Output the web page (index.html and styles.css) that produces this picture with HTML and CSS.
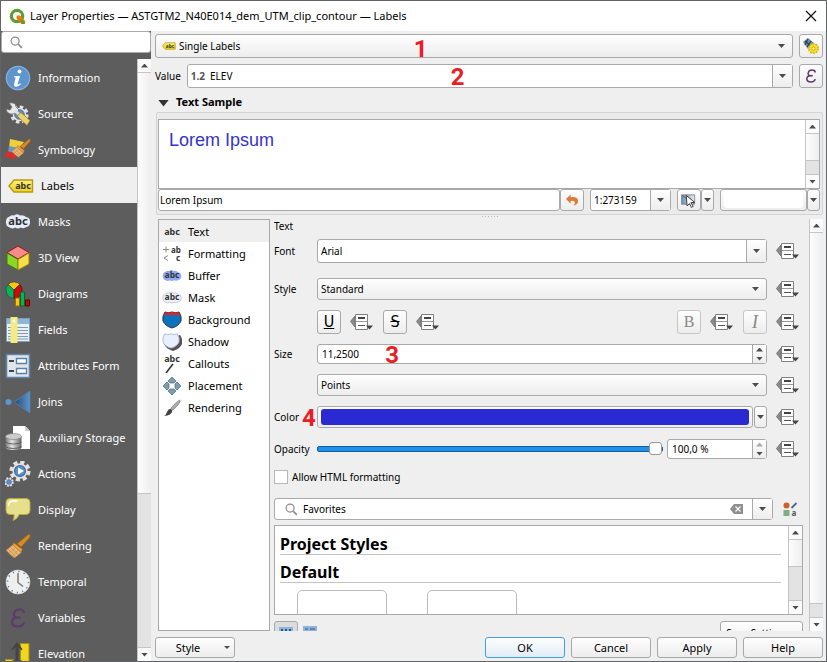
FILE: index.html
```html
<!DOCTYPE html>
<html lang="en">
<head>
<meta charset="utf-8">
<title>Layer Properties</title>
<link rel="stylesheet" href="styles.css">
</head>
<body>
<svg class="defs" aria-hidden="true">
  <defs>
    <linearGradient id="gy" x1="0" y1="0" x2="0" y2="1"><stop offset="0" stop-color="#fdf17a"/><stop offset="1" stop-color="#edd11c"/></linearGradient>
    <linearGradient id="gj" x1="0" x2="1"><stop offset="0" stop-color="#274a72"/><stop offset="1" stop-color="#5d95cf"/></linearGradient>
    <linearGradient id="gc" x1="0" x2="1"><stop offset="0" stop-color="#777"/><stop offset=".4" stop-color="#e4e4e4"/><stop offset="1" stop-color="#666"/></linearGradient>
    <linearGradient id="gw" x1="0" x2="1"><stop offset="0" stop-color="#6b8fae"/><stop offset="1" stop-color="#e8eef3"/></linearGradient>
    <symbol id="override" viewBox="0 0 24 18">
      <path d="M5 3v11L.5 8.500z" fill="#8a8a8a" stroke="#777"/>
      <path d="M5.500 1.500h12v15h-12z" fill="#fff" stroke="#808080"/>
      <path d="M8 5h7" stroke="#444" stroke-width="2"/>
      <path d="M6 8.500h11" stroke="#999"/>
      <path d="M8 12.500h7" stroke="#555"/>
      <path d="M16 12.500h7l-3.500 4z" fill="#444"/>
    </symbol>
    <symbol id="search" viewBox="0 0 14 14"><circle cx="5.500" cy="5.500" r="4.300" fill="#fafafa" stroke="#8c8c8c" stroke-width="1.300"/><path d="M8.800 8.800l4 4" stroke="#8c8c8c" stroke-width="1.700"/></symbol>
    <symbol id="tag" viewBox="0 0 26 14"><path d="M1 7l5-6h18.500v12H6z" fill="url(#gy)" stroke="#b89a12" stroke-width="1.400"/><text x="15" y="10" class="abc">abc</text></symbol>
    <symbol id="cloud" viewBox="0 0 28 18"><path d="M5 3Q7 1 10 2Q13-.5 16 2Q20 1 23 4Q27 4 27 9Q27 14 23 14.500Q20 16.500 17 15Q14 17 11 15Q8 17 5 15Q1 14 1 9Q1 4 5 3z"/><text x="14" y="12" class="abc abc-lg">abc</text></symbol>
    <symbol id="shield" viewBox="0 0 20 18"><path d="M3 1Q6 2.500 10 1Q14 2.500 17 1Q20 5 19 10Q17 15 10 17Q3 15 1 10Q0 5 3 1z"/></symbol>
    <symbol id="brush" viewBox="0 0 24 24"><path d="M22 1q2 1 1 3l-8 9-4-3z" fill="#d88a28" stroke="#9c5f14" stroke-width=".8"/><path d="M8 9l8 6-1 3-8-6z" fill="#f0a23c" stroke="#a86a1c" stroke-width=".6"/><path d="M7 11l8 7-6 5q-4-2-8-7z" fill="#e8b878" stroke="#a87838" stroke-width=".6"/><path d="M5 13l7 7M3 15l7 7M9 14l-5 4M12 16l-5 5" stroke="#b98746" stroke-width=".6"/></symbol>
    <symbol id="gear" viewBox="0 0 20 20"><circle cx="10" cy="10" r="7.800" fill="none" stroke="#e3e3e3" stroke-width="3.600" stroke-dasharray="3.600 2.520"/><circle cx="10" cy="10" r="7" fill="#e3e3e3"/><circle cx="10" cy="10" r="5" fill="#5a8fcc" stroke="#3c6597"/></symbol>
    <symbol id="i-info" viewBox="0 0 26 26"><circle cx="13" cy="13" r="11.700" fill="#5f95cf" stroke="#87afe0" stroke-width="1.200"/><circle cx="14.500" cy="6.500" r="2" fill="#fff"/><path d="M9.500 11h5.500l-2.300 8q0 1.300 2.500-.7l.8.7q-3 3.500-6 2.500-1.500-.7-1-2.500l1.700-6.500H9z" fill="#fff"/></symbol>
    <symbol id="i-source" viewBox="0 0 26 26"><g transform="translate(5 4)"><use href="#gear" width="19" height="19"/></g><path d="M4 2l3 4-2 3-4-1q1 5 6 5l4-1 3-3-3-3q0-5-7-4z" fill="#e9e9e9" stroke="#666" stroke-width=".7"/><path d="M10 10l5 4" stroke="#ddd" stroke-width="3"/><path d="M12 15l4-3.500 9 8-3 5z" fill="#ead46c" stroke="#8c772a" stroke-width=".8"/></symbol>
    <symbol id="i-symb" viewBox="0 0 26 26"><path d="M5 2l14 3-6 9-9-3z" fill="#f1cf38"/><path d="M4 9l10 2-2 5-9-1z" fill="#6d95bd"/><path d="M2 14l10 3-2 5-10-2z" fill="#d92d2b"/><use href="#brush" x="6" y="0" width="20" height="22"/></symbol>
    <symbol id="i-3d" viewBox="0 0 26 26"><path d="M13 1l11 6.500L13 14 2 7.500z" fill="#f58c8c" stroke="#a51212"/><path d="M2 8l11 6.500V25L2 19z" fill="#8ad62b" stroke="#3f7d0a"/><path d="M24 8l-11 6.500V25l11-6z" fill="#f8de49" stroke="#a38405"/></symbol>
    <symbol id="i-diag" viewBox="0 0 26 26"><path d="M9 9L3 3.500A8.200 8.200 0 0 1 15 3.500z" fill="#f6c80f" stroke="#533" stroke-width=".6"/><path d="M9 9v8.200A8.200 8.200 0 0 1 3 3.500z" fill="#0bb05a" stroke="#053" stroke-width=".6"/><path d="M9 9v8.200A8.200 8.200 0 0 0 15 3.500z" fill="#c80c0c" stroke="#500" stroke-width=".6"/><path d="M10.500 17h4v8h-4z" fill="#f6c80f" stroke="#a60"/><path d="M15.500 11h4v14h-4z" fill="#0bb05a" stroke="#063"/><path d="M20.500 19h4v6h-4z" fill="#b00c0c" stroke="#600"/></symbol>
    <symbol id="i-fields" viewBox="0 0 26 26"><path d="M1.500 1.500h23v23h-23z" fill="#eaf1f6" stroke="#7a9fc0"/><path d="M2 2h22v5H2z" fill="#8fb5d8"/><path d="M3 10.500h20M3 13.500h20M3 16.500h20M3 19.500h20M3 22h20" stroke="#7f98ae"/><path d="M6 0h6v26H6z" fill="#f3e98c" stroke="#f7f05a"/><circle cx="9" cy="4" r="1.500" fill="#fff"/></symbol>
    <symbol id="i-form" viewBox="0 0 26 26"><path d="M1.500 1.500h23v23h-23z" fill="#e2e5e8" stroke="#5c83ab" stroke-width="1.600"/><path d="M11.500 5.500h10v5h-10zM11.500 15.500h10v5h-10z" fill="#fff" stroke="#5a81aa" stroke-width="1.400"/><path d="M4 8h5M4 18h5" stroke="#444" stroke-width="2"/></symbol>
    <symbol id="i-joins" viewBox="0 0 26 26"><circle cx="3.500" cy="13" r="3" fill="#5d95cf"/><path d="M9 13L25 2v22z" fill="url(#gj)" stroke="#4f82b8" stroke-width=".8"/></symbol>
    <symbol id="i-aux" viewBox="0 0 26 26"><path d="M8 1h12l5 5v18H8z" fill="#fff"/><path d="M20 1v5h5z" fill="#ccc"/><path d="M.5 11.500v11q0 2.500 8 2.500t8-2.500v-11z" fill="url(#gc)"/><path d="M.5 17q2 2 8 2t8-2M.5 21.500q2 2 8 2t8-2" fill="none" stroke="#555" stroke-width=".9"/><ellipse cx="8.500" cy="11.500" rx="8" ry="3" fill="#ccc" stroke="#777" stroke-width=".6"/></symbol>
    <symbol id="i-actions" viewBox="0 0 26 26"><use href="#gear" x="4" y="-1" width="22" height="22"/><path d="M13 6.500v7l6-3.500z" fill="#fff"/><use href="#gear" x="-1" y="16" width="10" height="10"/></symbol>
    <symbol id="i-display" viewBox="0 0 26 26"><path d="M5 1.500h16q4 0 4 4v8q0 4-4 4h-7q-1 4-6 6 1.500-3 1-6H5q-4 0-4-4v-8q0-4 4-4z" fill="#e6df8c" stroke="#bdaa3c"/><path d="M3.500 9q0-5 5-5h4" fill="none" stroke="#fff" stroke-width="1.300"/></symbol>
    <symbol id="i-time" viewBox="0 0 26 26"><circle cx="13" cy="13" r="12" fill="#eef0f0" stroke="#ddd" stroke-width=".6"/><circle cx="13" cy="13" r="10.500" fill="none" stroke="#4b7fb5" stroke-width="1.500" stroke-dasharray="1.200 4.300"/><path d="M13 4v9.500l5 4" fill="none" stroke="#777" stroke-width="1.500"/></symbol>
    <symbol id="epsilon" viewBox="0 0 16 20"><path d="M14 5q0-3.500-4.500-3.500T4 5.500 8 9.500H10.500M8 9.500q-6 0-6 4.500 0 4.500 6 4.500 5 0 6-4" fill="none" stroke="currentColor" stroke-width="2.200"/></symbol>
    <symbol id="i-elev" viewBox="0 0 26 26"><path d="M15.500 2.500h8.500v23h-8.500z" fill="#f2d61b" stroke="#a98f10"/><path d="M.5 18.500h8v7h-8z" fill="#f2d61b" stroke="#a98f10"/><path d="M12 1l5.500 7-1 1.500L13.500 6v15h-3V6l-3 3.500-1-1.500z" fill="#444"/><path d="M7 20.500h10" stroke="#444" stroke-width="2"/></symbol>
  </defs>
</svg>

<div class="dialog">
  <header class="titlebar">
    <svg class="logo" viewBox="0 0 18 18"><circle cx="8.500" cy="8.500" r="6" fill="#fff" stroke="#5a9e33" stroke-width="3.400"/><path d="M8 8h3.500l5.500 5.500V17h-4L8 11.500z" fill="#ee7913"/><path d="M11.500 12.500h3L17 17h-3z" fill="#5a9e33"/></svg>
    <h1>Layer Properties — ASTGTM2_N40E014_dem_UTM_clip_contour — Labels</h1>
    <button class="close" aria-label="Close"><svg viewBox="0 0 12 12"><path d="M1 1l10 10M11 1L1 11" stroke="#111" stroke-width="1.200"/></svg></button>
  </header>

  <div class="body">
    <aside class="side">
      <label class="side-search"><svg><use href="#search"/></svg><input type="text" aria-label="Search"></label>
      <div class="side-list">
        <nav>
          <a href="#"><svg><use href="#i-info"/></svg>Information</a>
          <a href="#"><svg><use href="#i-source"/></svg>Source</a>
          <a href="#"><svg><use href="#i-symb"/></svg>Symbology</a>
          <a href="#" class="current"><svg><use href="#tag"/></svg>Labels</a>
          <a href="#"><svg class="cloud-mask"><use href="#cloud"/></svg>Masks</a>
          <a href="#"><svg><use href="#i-3d"/></svg>3D View</a>
          <a href="#"><svg><use href="#i-diag"/></svg>Diagrams</a>
          <a href="#"><svg><use href="#i-fields"/></svg>Fields</a>
          <a href="#"><svg><use href="#i-form"/></svg>Attributes Form</a>
          <a href="#"><svg><use href="#i-joins"/></svg>Joins</a>
          <a href="#"><svg><use href="#i-aux"/></svg>Auxiliary Storage</a>
          <a href="#"><svg><use href="#i-actions"/></svg>Actions</a>
          <a href="#"><svg><use href="#i-display"/></svg>Display</a>
          <a href="#"><svg><use href="#brush"/></svg>Rendering</a>
          <a href="#"><svg><use href="#i-time"/></svg>Temporal</a>
          <a href="#"><svg class="eps"><use href="#epsilon"/></svg>Variables</a>
          <a href="#"><svg><use href="#i-elev"/></svg>Elevation</a>
        </nav>
        <div class="sbar sbar-side"><i class="up"></i><b></b><i class="down"></i></div>
      </div>
    </aside>

    <main>
      <div class="row top">
        <div class="select mode"><svg><use href="#tag"/></svg><select aria-label="Label mode"><option>Single Labels</option></select><span class="mark mark-1">1</span></div>
        <button class="btn tool" aria-label="Automated placement settings"><svg viewBox="0 0 18 18"><path d="M1 5l5-4 6 5-6 6z" fill="#6f8ea6"/><path d="M3 4l6 5M6 2l-3 6M9 4L5 10" stroke="#24445e" stroke-width="1.200"/><circle cx="11.500" cy="11.500" r="4.800" fill="#f4dd2b" stroke="#d6b70e" stroke-width="1.400" stroke-dasharray="2 1"/><circle cx="11.500" cy="11.500" r="1.600" fill="#fff6a0" stroke="#b89a12" stroke-width=".7"/></svg></button>
      </div>
      <div class="row value">
        <label for="value">Value</label>
        <div class="combo"><span class="num">1.2</span><input id="value" type="text" value="ELEV"><button class="drop" aria-label="Choose field"></button><span class="mark mark-2">2</span></div>
        <button class="btn tool" aria-label="Expression"><svg class="eps"><use href="#epsilon"/></svg></button>
      </div>
      <button class="group"><i></i>Text Sample</button>
      <section class="sample">
        <div class="preview"><p>Lorem Ipsum</p><div class="sbar sbar-preview"><i class="up"></i><b></b><i class="down"></i></div></div>
        <div class="sample-row">
          <input class="field" type="text" value="Lorem Ipsum" aria-label="Sample text">
          <button class="btn undo" aria-label="Reset"><svg viewBox="0 0 14 12"><path d="M0 5l5-5v3q8-1 8 4 0 4-5 5 2-2 1.500-3.500Q9 6.500 5 7v3z" fill="#e07a3a"/></svg></button>
          <div class="combo scale"><input type="text" value="1:273159" aria-label="Scale"><button class="drop" aria-label="Scales"></button></div>
          <button class="btn pick" aria-label="Set from canvas"><svg viewBox="0 0 17 15"><path d="M.5 1.500h14v10H.5z" fill="url(#gw)" stroke="#889"/><path d="M1 2l13 9" stroke="#567"/><path d="M5.500 2l9 7.500-4 .3 2.500 4-2 1-2-4-2.500 2.500z" fill="#fff" stroke="#333"/></svg></button>
          <button class="btn drop" aria-label="Canvas scale options"></button>
          <button class="btn swatch white" aria-label="Background colour"><span></span></button>
          <button class="btn drop" aria-label="Colour options"></button>
        </div>
      </section>
      <div class="grip"></div>

      <div class="panes">
        <nav class="sections">
          <a href="#" class="current"><svg viewBox="0 0 20 18"><text x="10" y="12" class="abc">abc</text></svg>Text</a>
          <a href="#"><svg viewBox="0 0 20 18"><path d="M1 4.500h6M4 1.500v6M6 10.500l-4 2.500 4 2.500" stroke="#888" fill="none"/><text x="14" y="8" class="abc abc-sm">ab</text><text x="16" y="16" class="abc abc-sm">c</text></svg>Formatting</a>
          <a href="#"><svg class="cloud-buffer"><use href="#cloud"/></svg>Buffer</a>
          <a href="#"><svg class="cloud-light"><use href="#cloud"/></svg>Mask</a>
          <a href="#"><svg viewBox="0 0 20 18"><use href="#shield" fill="#0b72bd" stroke="#333"/><path d="M3 1Q6 2.500 10 1Q14 2.500 17 1l1 3H2z" fill="#e42222"/></svg>Background</a>
          <a href="#"><svg viewBox="0 0 20 18"><use href="#shield" x="1" y="1" fill="#555"/><use href="#shield" width="18" height="16" fill="#e9effd" stroke="#a9b4cc"/></svg>Shadow</a>
          <a href="#"><svg viewBox="0 0 20 18"><text x="10" y="7" class="abc">abc</text><path d="M11 9L4 18" stroke="#333" stroke-width="1.600"/></svg>Callouts</a>
          <a href="#"><svg viewBox="0 0 20 18"><path d="M10 0l4 4-2 2H8L6 4zM10 18l4-4-2-2H8l-2 2zM1 9l4-4 2 2v4l-2 2zM19 9l-4-4-2 2v4l2 2z" fill="#7c9cb0" stroke="#4a6b80" stroke-width=".7"/></svg>Placement</a>
          <a href="#"><svg viewBox="0 0 20 18"><path d="M18 1q1 3-7 10L9 9Q15 2 18 1z" fill="#aaa" stroke="#777" stroke-width=".6"/><path d="M8.500 9.500l2 2q-1 5-8.500 5.500 2-1 3-4 1-3 3.500-3.500z" fill="#444"/></svg>Rendering</a>
        </nav>

        <form class="form">
          <p class="title">Text</p>
          <div class="frow font"><label for="font">Font</label><div class="combo"><input id="font" type="text" value="Arial"><button type="button" class="drop" aria-label="Fonts"></button></div><button type="button" class="ov" aria-label="Override font"><svg><use href="#override"/></svg></button></div>
          <div class="frow"><label for="style">Style</label><div class="select"><select id="style"><option>Standard</option></select></div><button type="button" class="ov" aria-label="Override style"><svg><use href="#override"/></svg></button></div>
          <div class="frow">
            <span></span>
            <div class="bius">
              <button type="button" class="btn tool"><u>U</u></button><button type="button" class="ov" aria-label="Override underline"><svg><use href="#override"/></svg></button>
              <button type="button" class="btn tool"><s>S</s></button><button type="button" class="ov push" aria-label="Override strikeout"><svg><use href="#override"/></svg></button>
              <button type="button" class="btn tool off">B</button><button type="button" class="ov" aria-label="Override bold"><svg><use href="#override"/></svg></button>
              <button type="button" class="btn tool off"><em>I</em></button>
            </div>
            <button type="button" class="ov" aria-label="Override italic"><svg><use href="#override"/></svg></button>
          </div>
          <div class="frow"><label for="size">Size</label><div class="combo spin"><input id="size" type="text" value="11,2500"><span class="steps"><button type="button" class="up" aria-label="Increase size"></button><button type="button" class="down" aria-label="Decrease size"></button></span><span class="mark mark-3">3</span></div><button type="button" class="ov" aria-label="Override size"><svg><use href="#override"/></svg></button></div>
          <div class="frow"><span></span><div class="select"><select aria-label="Size unit"><option>Points</option></select></div><button type="button" class="ov" aria-label="Override unit"><svg><use href="#override"/></svg></button></div>
          <div class="frow"><label for="color">Color</label><div class="color"><button type="button" id="color" class="btn swatch blue" aria-label="Text colour"><span></span></button><button type="button" class="btn drop" aria-label="Colour options"></button><span class="mark mark-4">4</span></div><button type="button" class="ov" aria-label="Override colour"><svg><use href="#override"/></svg></button></div>
          <div class="frow"><label for="opacity">Opacity</label><div class="opacity"><input id="opacity" type="range" min="0" max="100" value="100"><div class="combo spin"><input type="text" value="100,0 %" aria-label="Opacity value"><span class="steps"><button type="button" class="up dim" aria-label="Increase opacity"></button><button type="button" class="down" aria-label="Decrease opacity"></button></span></div></div><button type="button" class="ov" aria-label="Override opacity"><svg><use href="#override"/></svg></button></div>
          <label class="check"><input type="checkbox">Allow HTML formatting</label>
          <div class="fav">
            <div class="combo"><svg class="lens"><use href="#search"/></svg><input type="text" value="Favorites" aria-label="Filter styles"><button type="button" class="clear" aria-label="Clear"><svg viewBox="0 0 13 10"><path d="M4 0h9v10H4L0 5z" fill="#8f8f8f"/><path d="M5.500 2.500l5 5M10.500 2.500l-5 5" stroke="#fff" stroke-width="1.200"/></svg></button><button type="button" class="drop" aria-label="Filters"></button></div>
            <button type="button" class="manager" aria-label="Style manager"><svg viewBox="0 0 15 15"><circle cx="3.500" cy="3.500" r="3" fill="#cf5f28"/><path d="M8.500 6l5-5" stroke="#466f98" stroke-width="2"/><path d="M.5 8h6v6h-6z" fill="#7fae82"/><text x="11" y="14" class="letter">a</text></svg></button>
          </div>
          <div class="styles">
            <div class="styles-body"><h2>Project Styles</h2><h2>Default</h2><div class="cards"><span></span><span></span></div></div>
            <div class="sbar sbar-styles"><i class="up"></i><b></b><i class="down"></i></div>
          </div>
          <div class="views">
            <button type="button" class="btn icons" aria-label="Icon view"><svg viewBox="0 0 14 12"><path d="M0 0h14v12H0z" fill="#8fb4dc"/><path d="M2 3h2M6 3h2M10 3h2" stroke="#27598f" stroke-width="2"/></svg></button>
            <button type="button" class="list" aria-label="List view"><svg viewBox="0 0 14 12"><path d="M0 0h14v12H0z" fill="#8fb4dc"/><path d="M2 3h3M7 3h5" stroke="#27598f"/></svg></button>
            <button type="button" class="btn save">Save Settings…</button>
          </div>
        </form>
        <div class="sbar sbar-form"><i class="up"></i><b></b><i class="down"></i></div>
      </div>

      <footer>
        <button class="btn style">Style</button>
        <button class="btn ok">OK</button>
        <button class="btn">Cancel</button>
        <button class="btn">Apply</button>
        <button class="btn">Help</button>
      </footer>
    </main>
  </div>
</div>
</body>
</html>
```
FILE: styles.css
```css
* { box-sizing: border-box; }

:root {
  --line: #a9a9a9;
  --face: linear-gradient(#fefefe, #ededed);
  --bg: #efefef;
}

body {
  margin: 0;
  padding: 1px;
  height: 100vh;
  overflow: hidden;
  background: #606468;
  color: #000;
  font: 10px/14px "Noto Sans", "Open Sans", sans-serif;
}

button, input, select { font: inherit; color: inherit; margin: 0; padding: 0; border: 0; background: none; border-radius: 0; }
a { color: inherit; text-decoration: none; }
svg { display: block; flex: none; }
h1, h2, p { margin: 0; }
.defs { position: absolute; width: 0; height: 0; }

.abc { font: bold 9px "Noto Sans", sans-serif; fill: #333; stroke: none; text-anchor: middle; }
.abc-sm { font-size: 8px; }
.abc-lg { font-size: 12px; }
.letter { font: bold 8px "Noto Sans", sans-serif; fill: #555; text-anchor: middle; }

.dialog { height: 100%; display: flex; flex-direction: column; background: var(--bg); }

.titlebar { flex: none; height: 30px; display: flex; align-items: center; background: #fff; padding: 0 9px 0 8px; gap: 4px; }
.titlebar h1 { flex: 1; font-size: 11px; font-weight: 400; }
.logo { width: 17px; height: 17px; }
.close svg { width: 12px; height: 12px; }

.body { flex: 1; min-height: 0; display: flex; }

/* Sidebar */
.side { flex: none; width: 150px; display: flex; flex-direction: column; background: #5d5d5d; }
.side-search { flex: none; height: 22px; display: flex; align-items: center; background: #fff; border: 1px solid var(--line); border-radius: 3px; padding-left: 8px; gap: 4px; }
.side-search svg { width: 13px; height: 13px; }
.side-search input { flex: 1; min-width: 0; outline: 0; }
.side-list { flex: 1; min-height: 0; display: flex; margin-top: 6px; }
.side-list nav { flex: 1; overflow: hidden; }
.side-list a { height: 36px; display: flex; align-items: center; gap: 7px; padding: 1px 0 0 4px; color: #fff; font-size: 11px; white-space: nowrap; }
.side-list a svg { width: 26px; height: 26px; }
.side-list a.current { background: var(--bg); color: #000; padding-left: 7px; }
.side-list .eps { padding: 3px; }
.eps { color: #5d3a6e; }
.cloud-mask { fill: #e6ecfa; }
.cloud-buffer { fill: #8fabf5; }
.cloud-light { fill: #eef1fa; stroke: #b4bac8; stroke-width: 1; }

/* Scroll bars */
.sbar { flex: none; width: 14px; display: flex; flex-direction: column; background: #e3e3e3; border-left: 1px solid #c4c4c4; }
.sbar i { flex: none; height: 14px; display: flex; align-items: center; justify-content: center; background: #fbfbfb; }
.sbar .up { border-bottom: 1px solid #c4c4c4; }
.sbar .down { margin-top: auto; border-top: 1px solid #c4c4c4; }
.sbar b { background: linear-gradient(90deg, #fdfdfd, #eee); border-bottom: 1px solid #c4c4c4; }
.sbar-side b { height: 70%; }
.sbar-preview b { height: 27px; }
.sbar-form b { height: 90%; }
.sbar-styles b { height: 27px; }

.up::before, .down::before, .drop::before, .select::after, .style::after {
  content: ""; display: block; width: 7px; height: 4px; background: #4c4c4c; clip-path: polygon(0 0, 100% 0, 50% 100%);
}
.up::before { clip-path: polygon(50% 0, 100% 100%, 0 100%); }
.dim::before { background: #aaa; }

/* Controls */
.btn { display: flex; align-items: center; justify-content: center; background: var(--face); border: 1px solid var(--line); border-radius: 3px; }
.tool { flex: none; width: 24px; height: 24px; }
.tool svg { width: 18px; height: 18px; }
.tool .eps { width: 12px; height: 14px; }
.select, .combo { position: relative; display: flex; align-items: center; height: 22px; min-width: 0; border: 1px solid var(--line); border-radius: 3px; }
.select { background: var(--face); }
.select select { appearance: none; flex: 1; align-self: stretch; min-width: 0; padding: 0 24px 0 3px; outline: 0; }
.select::after { position: absolute; right: 7px; top: 50%; margin-top: -2px; pointer-events: none; }
.combo { background: #fff; }
.combo input { flex: 1; min-width: 0; padding-left: 3px; outline: 0; }
.drop { display: flex; align-items: center; justify-content: center; }
.combo .drop { flex: none; width: 20px; align-self: stretch; border-left: 1px solid var(--line); background: var(--face); }
.btn.drop { flex: none; width: 13px; }
.steps { width: 14px; align-self: stretch; display: flex; flex-direction: column; border-left: 1px solid var(--line); background: var(--face); }
.steps button { flex: 1; display: flex; align-items: center; justify-content: center; }
.spin input { padding-left: 4px; }
.spin { height: 20px; }

/* Numbered callouts laid over the controls */
.mark { position: absolute; top: 2px; color: #ed1c24; font: bold 24px/24px Roboto, "Liberation Sans", sans-serif; pointer-events: none; }
.mark-1 { left: 41%; margin-left: -3px; }
.mark-2 { left: 44%; margin-left: -3px; top: 0; }
.mark-3 { left: 15%; top: -2px; }
.mark-4 { left: -15px; top: 0; }

/* Main column */
main { flex: 1; min-width: 0; display: flex; flex-direction: column; padding: 3px 3px 3px 4px; }
.row { flex: none; display: flex; align-items: center; gap: 6px; }
.value { margin-top: 6px; }
.row .select, .row .combo { flex: 1; height: 24px; }
.mode svg { width: 14px; height: 12px; margin-left: 6px; }
.num { font-weight: bold; color: #555; padding: 0 2px 0 3px; }

.group { flex: none; height: 24px; padding: 4px 0 0 3px; display: flex; align-items: center; gap: 7px; font-size: 11px; font-weight: bold; }
.group i { width: 11px; height: 7px; margin-top: 2px; background: #333; clip-path: polygon(0 0, 100% 0, 50% 100%); }

.sample { flex: none; margin-left: 1px; padding: 6px 2px 3px 1px; border: 1px solid #d4d4d4; border-radius: 2px; background: #ebebeb; }
.preview { height: 70px; display: flex; background: #fff; border: 1px solid var(--line); }
.preview p { flex: 1; padding: 10px; color: #3333d0; font: 18px/21px "Liberation Sans", Arial, sans-serif; }
.sample-row { display: flex; height: 22px; }
.sample-row > * { height: 22px; }
.field { flex: 1; min-width: 0; background: #fff; border: 1px solid var(--line); border-radius: 3px; padding-left: 1px; }
.undo, .pick { flex: none; width: 24px; }
.undo svg { width: 13px; height: 12px; }
.scale { flex: none; width: 81px; margin: 0 6px; }
.pick svg { width: 16px; height: 15px; }
.sample-row .white { flex: none; width: 87px; margin-left: 6px; }
.swatch { padding: 2px 3px; }
.swatch span { flex: 1; align-self: stretch; border-radius: 3px; }
.white span { background: #fff; }
.blue span { background: #2a2ad2; }

.grip { flex: none; align-self: center; width: 17px; height: 4px; background: radial-gradient(circle, #bbb 1px, transparent 1px) 0 0 / 3px 3px; }

/* Panes */
.panes { flex: 1; min-height: 0; display: flex; overflow: hidden; }
.sections { flex: none; width: 112px; margin: 0 4px 0 3px; background: #fff; border: 1px solid var(--line); }
.sections a { height: 22px; display: flex; align-items: center; gap: 6px; padding: 1px 0 0 3px; font-size: 11px; }
.sections a.current { background: #efefef; }
.sections svg { width: 20px; height: 18px; }

.form { flex: 1; min-width: 0; display: flex; flex-direction: column; gap: 10px; padding-right: 6px; overflow: hidden; }
.form > * { flex: none; }
.title { margin-bottom: -4px; }
.frow { display: grid; grid-template-columns: 43px minmax(0, 1fr) 36px; align-items: center; }
.font { margin-bottom: 5px; }
.font .combo { height: 24px; }
.ov svg { width: 24px; height: 18px; }
.frow > .ov { padding-left: 9px; }
.bius { display: flex; align-items: center; gap: 9px; }
.bius .tool { font: 16px/18px "DejaVu Sans Condensed", "Noto Sans", sans-serif; }
.push { margin-right: auto; }
.off { color: #888; border-color: #c6c6c6; }
.off em { font-family: "Liberation Serif", serif; font-size: 18px; }
.bius .off { font-family: "Liberation Serif", serif; }
.color { position: relative; display: flex; height: 22px; gap: 1px; }
.color .blue { flex: 1; }
.opacity { display: flex; align-items: center; gap: 4px; height: 22px; }
.opacity input[type="range"] { appearance: none; flex: 1; min-width: 0; height: 14px; outline: 0; }
.opacity input[type="range"]::-webkit-slider-runnable-track { height: 6px; background: #2291ea; border: 1px solid #0c5fa8; border-radius: 2px; }
.opacity input[type="range"]::-webkit-slider-thumb { appearance: none; width: 13px; height: 13px; margin-top: -5px; background: #fdfdfd; border: 1px solid #999; border-radius: 3px; }
.opacity .spin { width: 100px; }
.check { display: flex; align-items: center; gap: 4px; height: 14px; margin-bottom: 4px; }
.check input { appearance: none; width: 14px; height: 14px; background: #fff; border: 1px solid #b8b8b8; }
.fav { display: flex; align-items: center; gap: 10px; padding-right: 5px; }
.fav .combo { flex: 1; }
.lens { width: 13px; height: 13px; margin: 0 2px 0 10px; }
.clear { padding-right: 9px; }
.clear svg { width: 13px; height: 10px; }
.manager svg { width: 15px; height: 15px; }
.styles { height: 90px; margin-top: -5px; display: flex; background: #fff; border: 1px solid var(--line); }
.styles-body { flex: 1; overflow: hidden; padding: 5px 7px 0 5px; }
.styles h2 { height: 24px; margin-bottom: 4px; font-size: 16px; line-height: 26px; border-bottom: 1px solid #c4c4c4; }
.cards { display: flex; gap: 40px; padding: 3px 17px; }
.cards span { width: 90px; height: 60px; border: 1px solid #bbb; border-radius: 5px; }
.views { display: flex; margin-top: -4px; gap: 5px; align-items: flex-start; }
.icons { width: 24px; height: 24px; background: #dcdcdc; }
.views svg { width: 14px; height: 12px; }
.list { padding-top: 5px; }
.save { width: 83px; height: 24px; margin-left: auto; }

footer { flex: none; display: flex; gap: 6px; margin-top: 6px; }
footer .btn { width: 80px; height: 21px; font-size: 11px; }
.style { margin-right: auto; position: relative; padding-right: 14px; }
.style::after { position: absolute; right: 4px; width: 6px; height: 3px; }
.ok { border-color: #3f9fe8; background: linear-gradient(#fcfeff, #e2ecf5); }
```
